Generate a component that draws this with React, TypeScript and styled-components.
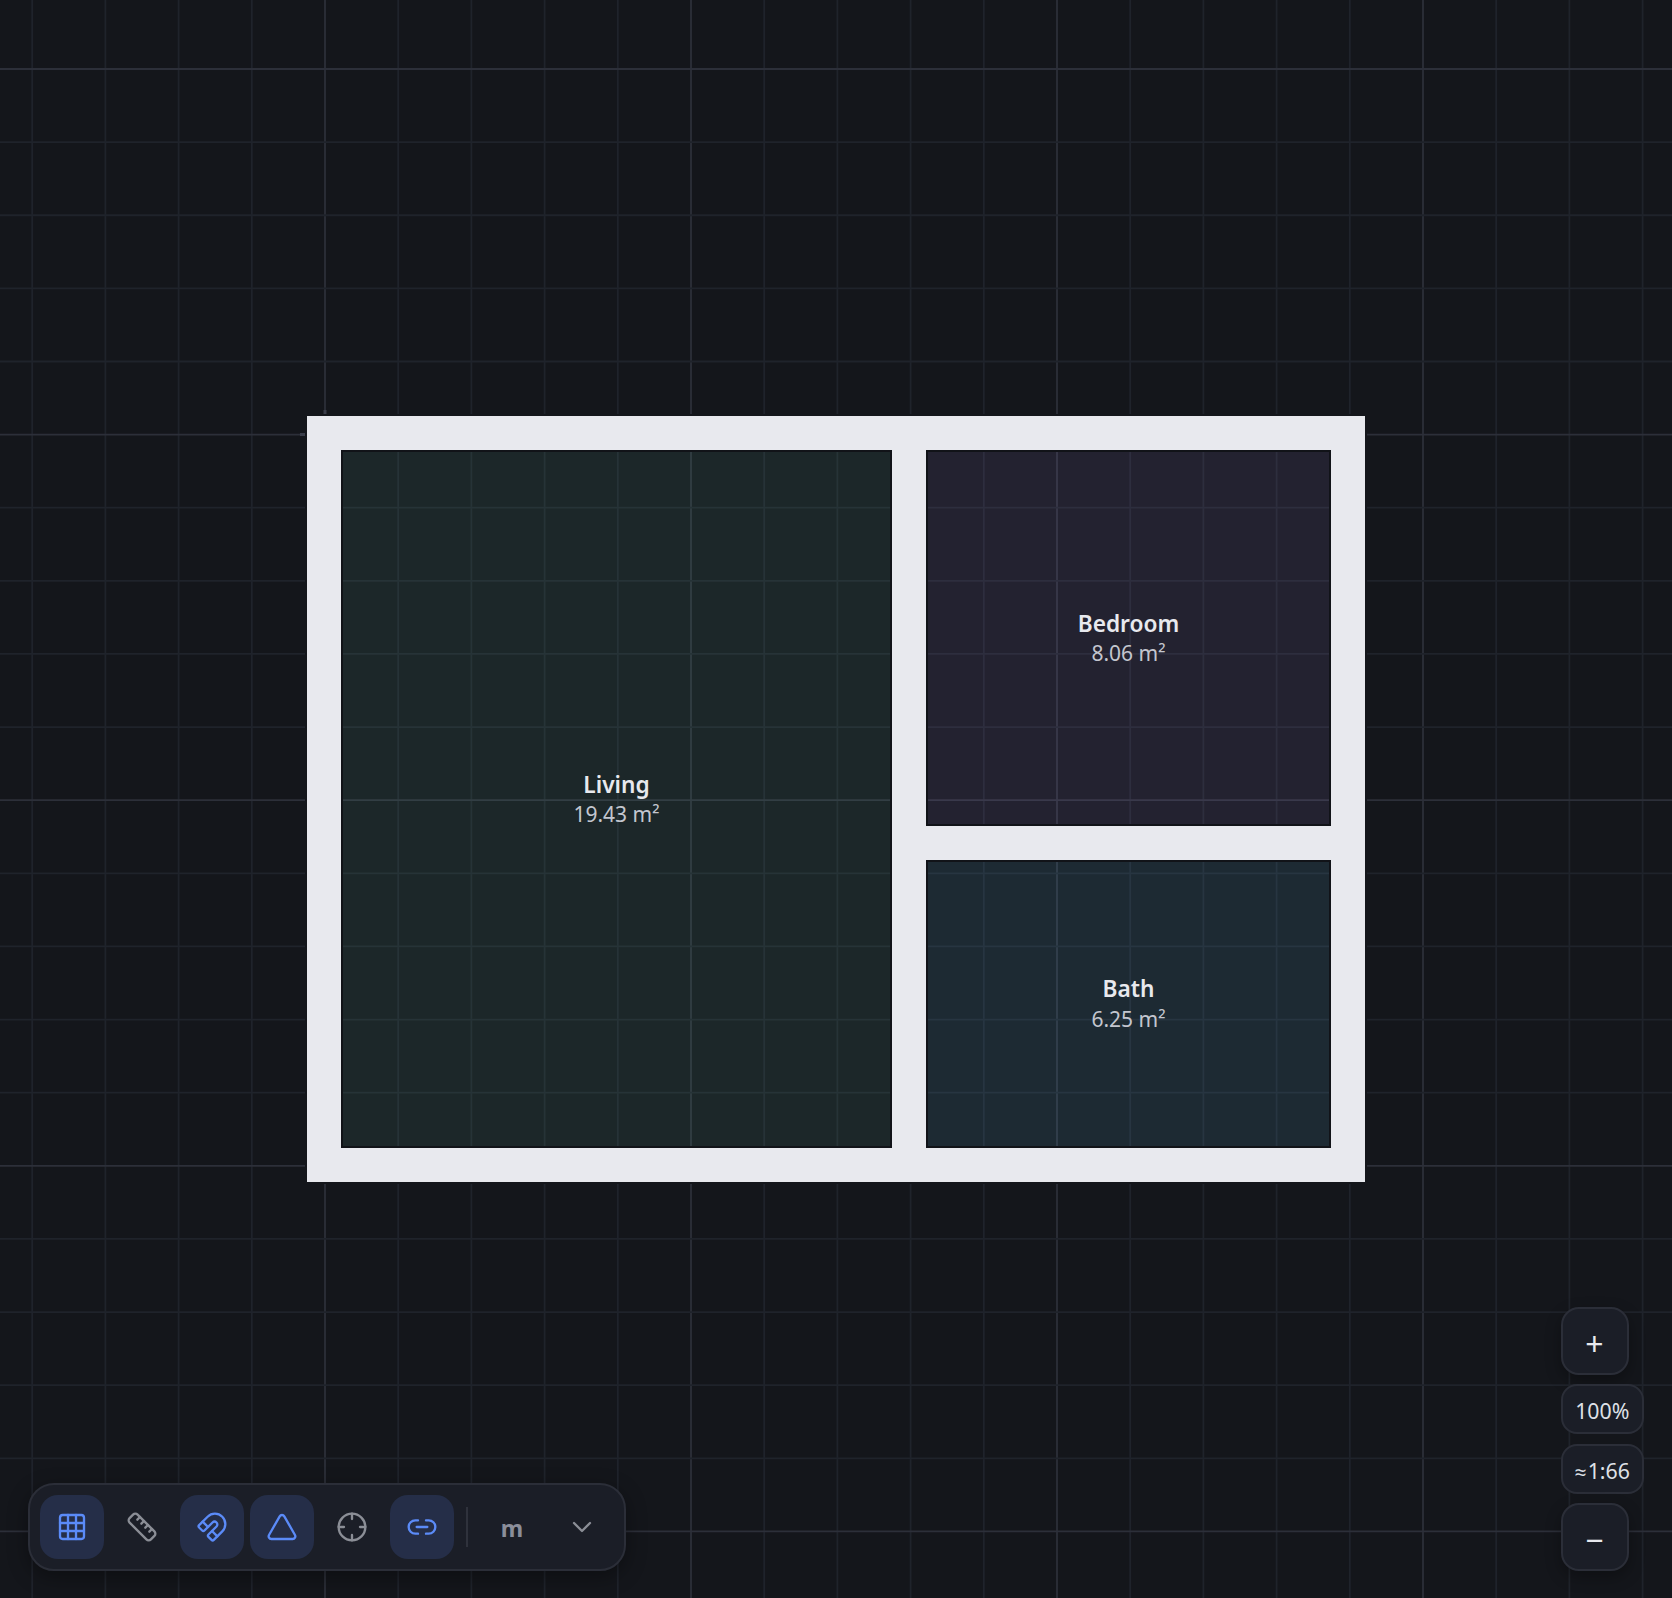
import styled, { createGlobalStyle } from "styled-components";
import { ChevronDown, Crosshair, Grid3x3, Link2, Magnet, Ruler, Triangle } from "lucide-react";

const Global = createGlobalStyle`
    html, body { margin: 0; padding: 0; background: #14161b; }
    body { font-family: "Noto Sans", "Open Sans", sans-serif; }
`;

const Canvas = styled.div`
    position: relative;
    width: 1672px;
    height: 1598px;
    overflow: hidden;
    background: #14161b;
`;
const Drawing = styled.svg`
    display: block;
`;
const RoomName = styled.text`
    font-family: "Noto Sans", sans-serif;
    font-size: 22.7px;
    font-weight: 600;
    fill: #e8e9ee;
    text-anchor: middle;
`;
const RoomArea = styled.text`
    font-family: "Noto Sans", sans-serif;
    font-size: 21px;
    fill: #c3c6cf;
    text-anchor: middle;
`;

const Toolbar = styled.div`
    position: absolute;
    left: 28px;
    bottom: 27px;
    display: flex;
    align-items: center;
    gap: 6px;
    height: 88px;
    padding: 0 10px 1px;
    box-sizing: border-box;
    width: 598px;
    background: #1b1e27;
    border: 2px solid #2b2e38;
    border-radius: 26px;
    box-shadow: 0 6px 20px rgba(0, 0, 0, 0.35);
`;
const ToolButton = styled.button<{ $active?: boolean }>`
    display: flex;
    align-items: center;
    justify-content: center;
    flex: none;
    width: 64px;
    height: 64px;
    padding: 0;
    border: 0;
    border-radius: 18px;
    background: ${(props) => (props.$active ? "#252e48" : "transparent")};
    color: ${(props) => (props.$active ? "#5b8bf8" : "#8b8e96")};
`;
const Divider = styled.div`
    flex: none;
    width: 2px;
    height: 40px;
    margin: 0 6px;
    background: #2f323c;
`;
const Unit = styled.div`
    flex: none;
    width: 64px;
    text-align: center;
    font-size: 23px;
    font-weight: 700;
    color: #8b8e9a;
    padding-top: 2px;
`;
const Chevron = styled.div`
    display: flex;
    justify-content: center;
    flex: none;
    width: 64px;
    color: #8b8e96;
`;

const ZoomColumn = styled.div`
    position: absolute;
    left: 1560.5px;
    bottom: 27px;
    display: flex;
    flex-direction: column;
    align-items: flex-start;
    gap: 9.3px;
`;
const ZoomButton = styled.button`
    display: flex;
    align-items: center;
    justify-content: center;
    width: 68px;
    height: 68px;
    padding: 4px 0 0;
    box-sizing: border-box;
    background: #1b1e27;
    border: 2px solid #2b2e38;
    border-radius: 18px;
    box-shadow: 0 6px 16px rgba(0, 0, 0, 0.3);
    color: #e8e9ee;
    font-family: "Noto Sans", sans-serif;
    font-size: 32px;
`;
const ZoomLabel = styled.div`
    display: flex;
    align-items: center;
    justify-content: center;
    width: 83.5px;
    height: 50px;
    padding-top: 3px;
    box-sizing: border-box;
    background: #1b1e27;
    border: 2px solid #2b2e38;
    border-radius: 16px;
    color: #dfe1e7;
    font-size: 21.3px;
`;
const Approx = styled.span`
    font-size: 21px;
    margin-right: 1px;
    padding-top: 3px;
`;

const STEP_X = 73.2;
const STEP_Y = 73.12;
const MAJOR = "#2c2f39";
const MINOR = "#1f232b";
const xs = Array.from({ length: 24 }, (_, i) => 325 + (i - 4) * STEP_X);
const ys = Array.from({ length: 22 }, (_, i) => 69 + i * STEP_Y);
const isMajorX = (x: number) => Math.round((x - 325) / STEP_X) % 5 === 0;
const isMajorY = (y: number) => Math.round((y - 69) / STEP_Y) % 5 === 0;

const rooms = [
    { name: "Living", area: "19.43 m²", x: 341, y: 450, w: 551, h: 698, fill: "rgba(110,200,170,0.1)", nameY: 793, areaY: 822 },
    { name: "Bedroom", area: "8.06 m²", x: 926, y: 450, w: 405, h: 376, fill: "rgba(180,150,240,0.1)", nameY: 632, areaY: 661 },
    { name: "Bath", area: "6.25 m²", x: 926, y: 860, w: 405, h: 288, fill: "rgba(96,190,230,0.12)", nameY: 997, areaY: 1027 },
];

function App() {
    return (
        <Canvas>
            <Global />
            <Drawing width={1672} height={1598} viewBox="0 0 1672 1598">
                {xs.map((x, i) => (
                    <line key={i} x1={x} x2={x} y1={0} y2={1598} stroke={isMajorX(x) ? MAJOR : MINOR} strokeWidth={1.8} />
                ))}
                {ys.map((y, i) => (
                    <line key={i} x1={0} x2={1672} y1={y} y2={y} stroke={isMajorY(y) ? MAJOR : MINOR} strokeWidth={1.8} />
                ))}
                {/* halo round the walls, the grid stops short of it */}
                <rect x={305} y={414} width={1062} height={770} fill="#14161b" />
                <rect x={300} y={433} width={5} height={3} fill="#3a3d49" />
                <rect x={323.5} y={410} width={3} height={4} fill="#3a3d49" />
                <rect x={307} y={416} width={1058} height={766} fill="#e8e9ee" />
                {rooms.map((r) => (
                    <g key={r.name}>
                        <rect x={r.x} y={r.y} width={r.w} height={r.h} fill="#14161b" />
                        {xs.filter((x) => x > r.x && x < r.x + r.w).map((x, i) => (
                            <line key={i} x1={x} x2={x} y1={r.y} y2={r.y + r.h} stroke={isMajorX(x) ? MAJOR : MINOR} strokeWidth={1.8} />
                        ))}
                        {ys.filter((y) => y > r.y && y < r.y + r.h).map((y, i) => (
                            <line key={i} x1={r.x} x2={r.x + r.w} y1={y} y2={y} stroke={isMajorY(y) ? MAJOR : MINOR} strokeWidth={1.8} />
                        ))}
                        <rect x={r.x} y={r.y} width={r.w} height={r.h} fill={r.fill} />
                        <rect x={r.x + 1} y={r.y + 1} width={r.w - 2} height={r.h - 2} fill="none" stroke="#111318" strokeWidth={2} />
                        <RoomName x={r.x + r.w / 2} y={r.nameY}>{r.name}</RoomName>
                        <RoomArea x={r.x + r.w / 2} y={r.areaY}>{r.area}</RoomArea>
                    </g>
                ))}
            </Drawing>
            <Toolbar>
                <ToolButton $active><Grid3x3 size={32} strokeWidth={1.75} /></ToolButton>
                <ToolButton><Ruler size={32} strokeWidth={1.75} /></ToolButton>
                <ToolButton $active><Magnet size={32} strokeWidth={1.75} /></ToolButton>
                <ToolButton $active><Triangle size={32} strokeWidth={1.75} /></ToolButton>
                <ToolButton><Crosshair size={32} strokeWidth={1.75} /></ToolButton>
                <ToolButton $active><Link2 size={32} strokeWidth={1.75} /></ToolButton>
                <Divider />
                <Unit>m</Unit>
                <Chevron><ChevronDown size={32} strokeWidth={1.75} /></Chevron>
            </Toolbar>
            <ZoomColumn>
                <ZoomButton>+</ZoomButton>
                <ZoomLabel>100%</ZoomLabel>
                <ZoomLabel><Approx>≈</Approx>1:66</ZoomLabel>
                <ZoomButton>−</ZoomButton>
            </ZoomColumn>
        </Canvas>
    );
}

export default App;
